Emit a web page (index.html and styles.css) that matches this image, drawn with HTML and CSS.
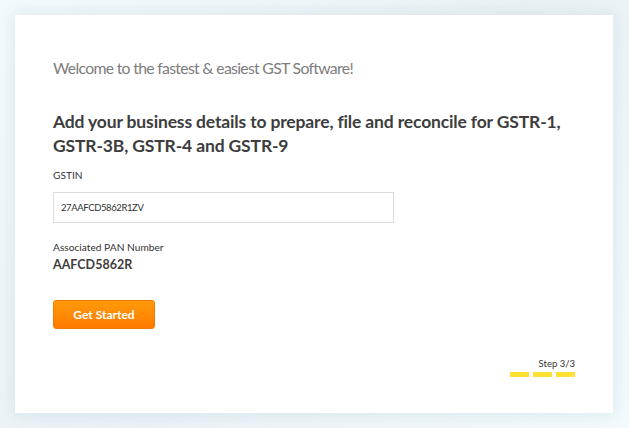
FILE: index.html
```html
<!DOCTYPE html>
<html>
<head>
<meta charset="utf-8">
<link rel="stylesheet" href="styles.css">
</head>
<body>
<div class="card">
  <h1 class="welcome">Welcome to the fastest &amp; easiest GST Software!</h1>
  <h2 class="lead">Add your business details to prepare, file and reconcile for GSTR-1, GSTR-3B, GSTR-4 and GSTR-9</h2>
  <label class="label">GSTIN</label>
  <div class="input">27AAFCD5862R1ZV</div>
  <div class="label pan-label">Associated PAN Number</div>
  <div class="pan">AAFCD5862R</div>
  <button class="btn">Get Started</button>
  <div class="step">
    <div class="step-text">Step 3/3</div>
    <div class="bars"><span></span><span></span><span></span></div>
  </div>
</div>
</body>
</html>
```
FILE: styles.css
```css
html, body { margin: 0; padding: 0; }
body {
  width: 629px; height: 428px;
  background: linear-gradient(135deg, #f1fafd 0%, #e9f1f5 50%, #f1fafd 100%);
  font-family: "Lato", "Open Sans", sans-serif;
  padding: 15px;
  box-sizing: border-box;
}
.card {
  width: 598px; height: 398px;
  background: #fff;
  box-shadow: 0 0 14px rgba(150, 175, 190, 0.25);
  box-sizing: border-box;
  padding: 41px 38px 0 38px;
  display: flex; flex-direction: column;
}
.welcome {
  margin: 0;
  font-size: 15.8px; font-weight: 400;
  color: #7d7d7d;
  line-height: 24px;
  letter-spacing: -0.7px;
}
.lead {
  margin: 30px 0 0 0;
  font-size: 17.5px; font-weight: 700;
  color: #3d3d3d;
  line-height: 24px;
  width: 540px;
  letter-spacing: -0.15px;
}
.label {
  font-size: 10.2px; color: #333;
  margin-top: 11px; line-height: 12px;
}
.input {
  margin-top: 11px;
  width: 341px; height: 31px;
  box-sizing: border-box;
  border: 1px solid #dcdcdc;
  font-size: 9.5px; color: #333;
  padding: 0 7px;
  display: flex; align-items: center;
  letter-spacing: -0.4px;
}
.pan-label { margin-top: 18px; }
.pan {
  margin-top: 4px;
  font-size: 12.5px; font-weight: 700; color: #3d3d3d;
  line-height: 16px;
}
.btn {
  margin-top: 27px;
  width: 102px; height: 29px;
  border: 1px solid #f07a00;
  border-radius: 3px;
  background: linear-gradient(#ff9a0a, #ff7b00);
  color: #fff;
  font-family: inherit; font-size: 12px; font-weight: 700;
  padding: 0;
}
.step {
  align-self: flex-end;
  margin-top: 29px;
  display: flex; flex-direction: column; align-items: flex-end;
}
.step-text { font-size: 9.5px; color: #333; line-height: 12px; }
.bars { display: flex; gap: 4px; margin-top: 2px; }
.bars span { width: 19px; height: 5px; background: #ffe033; }
```
